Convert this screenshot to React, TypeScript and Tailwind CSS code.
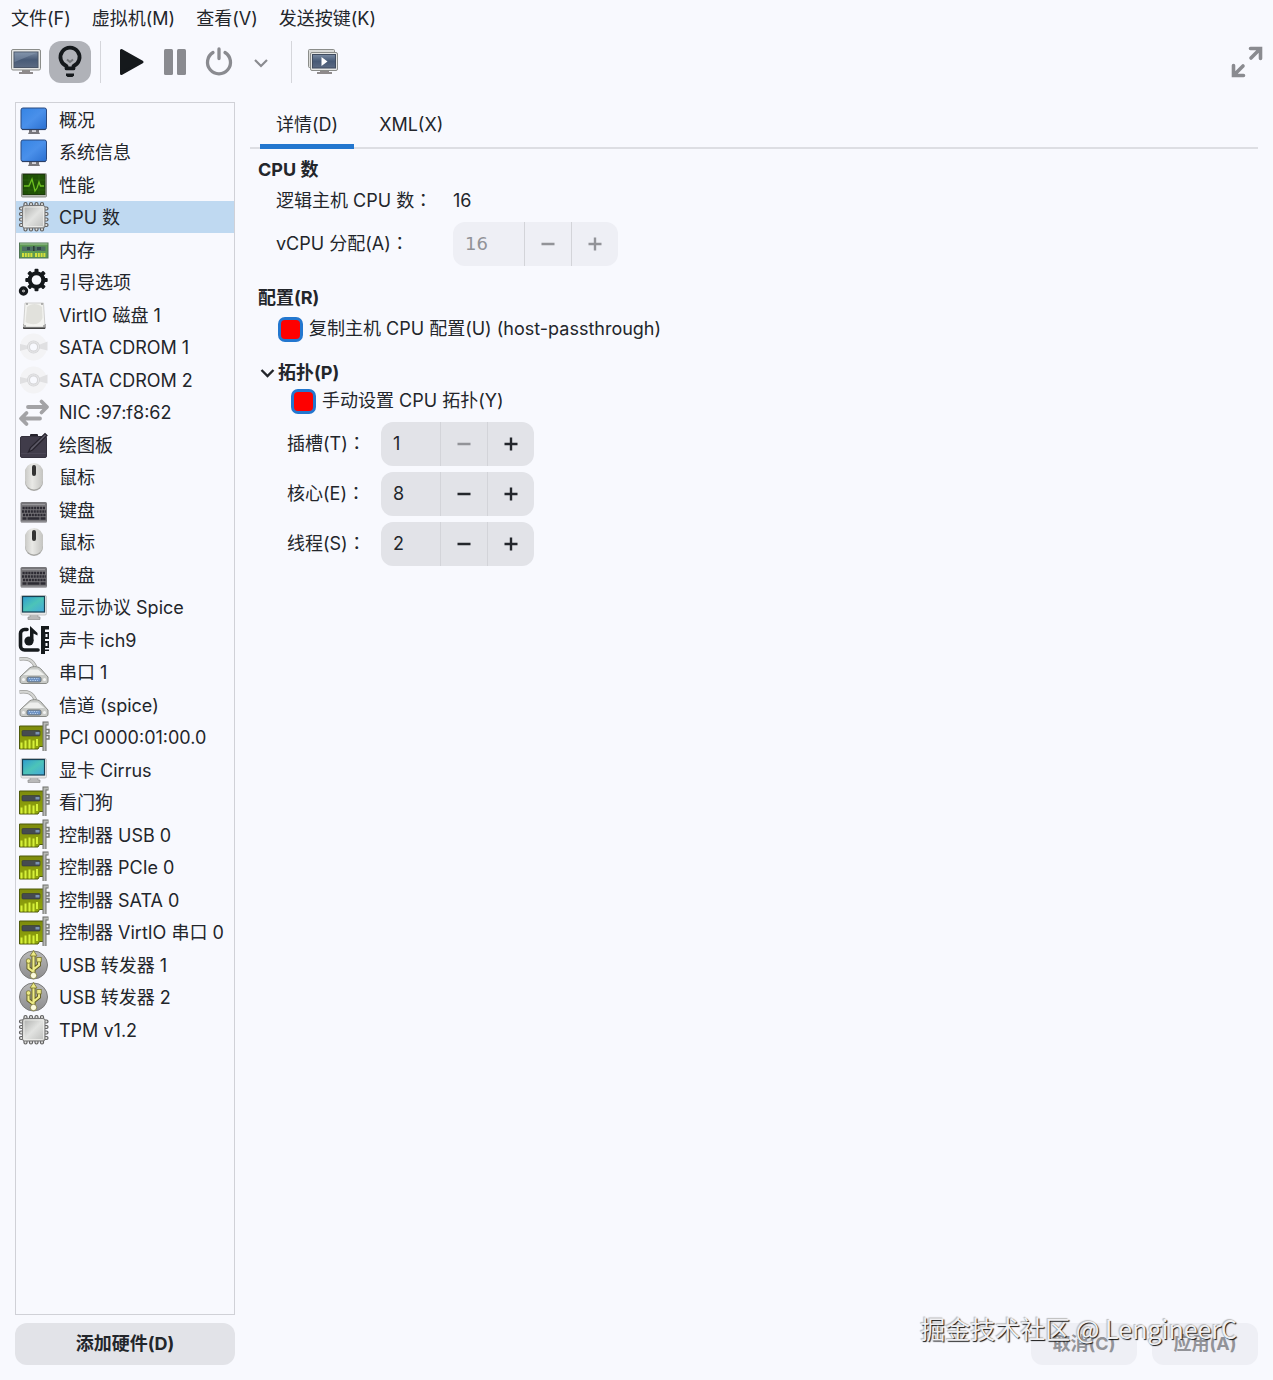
import React, { useState } from "react";

type IconName =
  | "monitor" | "perf" | "chip" | "ram" | "gears" | "disk" | "cd" | "nic" | "tablet"
  | "mouse" | "keyboard" | "display" | "sound" | "serial" | "card" | "usb";

const devices: { icon: IconName; label: string }[] = [
  { icon: "monitor", label: "概况" },
  { icon: "monitor", label: "系统信息" },
  { icon: "perf", label: "性能" },
  { icon: "chip", label: "CPU 数" },
  { icon: "ram", label: "内存" },
  { icon: "gears", label: "引导选项" },
  { icon: "disk", label: "VirtIO 磁盘 1" },
  { icon: "cd", label: "SATA CDROM 1" },
  { icon: "cd", label: "SATA CDROM 2" },
  { icon: "nic", label: "NIC :97:f8:62" },
  { icon: "tablet", label: "绘图板" },
  { icon: "mouse", label: "鼠标" },
  { icon: "keyboard", label: "键盘" },
  { icon: "mouse", label: "鼠标" },
  { icon: "keyboard", label: "键盘" },
  { icon: "display", label: "显示协议 Spice" },
  { icon: "sound", label: "声卡 ich9" },
  { icon: "serial", label: "串口 1" },
  { icon: "serial", label: "信道 (spice)" },
  { icon: "card", label: "PCI 0000:01:00.0" },
  { icon: "display", label: "显卡 Cirrus" },
  { icon: "card", label: "看门狗" },
  { icon: "card", label: "控制器 USB 0" },
  { icon: "card", label: "控制器 PCIe 0" },
  { icon: "card", label: "控制器 SATA 0" },
  { icon: "card", label: "控制器 VirtIO 串口 0" },
  { icon: "usb", label: "USB 转发器 1" },
  { icon: "usb", label: "USB 转发器 2" },
  { icon: "chip", label: "TPM v1.2" },
];

function Gradients() {
  return (
    <svg width="0" height="0" className="absolute" aria-hidden="true">
      <defs>
        <linearGradient id="gBlue" x1="0" y1="0" x2="1" y2="1">
          <stop offset="0" stopColor="#3584e4" /><stop offset="0.5" stopColor="#4a90ea" /><stop offset="1" stopColor="#2a6fd0" />
        </linearGradient>
        <linearGradient id="gScreen" x1="0" y1="0" x2="1" y2="1">
          <stop offset="0" stopColor="#2f9bd0" /><stop offset="0.5" stopColor="#4cc4b8" /><stop offset="1" stopColor="#45a8dc" />
        </linearGradient>
        <linearGradient id="gSlate" x1="0" y1="0" x2="0" y2="1">
          <stop offset="0" stopColor="#7a8ba3" /><stop offset="0.5" stopColor="#475a76" /><stop offset="1" stopColor="#5b6a82" />
        </linearGradient>
        <linearGradient id="gChip" x1="0" y1="0" x2="1" y2="1">
          <stop offset="0" stopColor="#a9aaa8" /><stop offset="0.5" stopColor="#e2e3e1" /><stop offset="1" stopColor="#bcbdbb" />
        </linearGradient>
        <linearGradient id="gMouse" x1="0" y1="0" x2="1" y2="0">
          <stop offset="0" stopColor="#c9c9c6" /><stop offset="0.4" stopColor="#e9e9e6" /><stop offset="1" stopColor="#c4c4c1" />
        </linearGradient>
        <linearGradient id="gUsb" x1="0" y1="0" x2="0" y2="1">
          <stop offset="0" stopColor="#b9b9b9" /><stop offset="1" stopColor="#8c8c8e" />
        </linearGradient>
        <linearGradient id="gCard" x1="0" y1="0" x2="0" y2="1">
          <stop offset="0" stopColor="#7d8a0c" /><stop offset="1" stopColor="#93a80c" />
        </linearGradient>
      </defs>
    </svg>
  );
}

const gearTeeth = [0, 45, 90, 135, 180, 225, 270, 315];
const chipPins = [7.5, 13, 18.5, 24];

const drawings: Record<IconName, React.ReactNode> = {
  monitor: (
    <>
      <path d="M11 25h10v3l1 2H10l1-2z" fill="#77767b" />
      <path d="M14 26h4v2h-4z" fill="#d5d4da" />
      <rect x="3" y="4" width="25.500" height="21.500" rx="2" fill="url(#gBlue)" stroke="#2b4a80" strokeWidth="1" />
      <path d="M4 25.500h23.500" stroke="#2c3f63" strokeWidth="1.200" />
    </>
  ),
  perf: (
    <>
      <rect x="3.500" y="4.500" width="25" height="23.500" rx="1" fill="#b5b9b1" stroke="#8d918a" />
      <rect x="5" y="5.500" width="22" height="20" fill="#1f5106" stroke="#1b3a0b" />
      <path d="M5 11h22M5 21h22M11 6v19M21 6v19" stroke="#2f6a10" strokeWidth=".6" />
      <path d="M6 17h5l3-7 3 12 2-3 2-6 1.500 4H26" fill="none" stroke="#6cc020" strokeWidth="1.300" />
    </>
  ),
  chip: (
    <>
      {chipPins.map((p) => (
        <g key={p} fill="#e2e2e0" stroke="#5f5f5f" strokeWidth="1.200">
          <rect x={p - 1.500} y="1.500" width="3" height="28.500" rx="1.500" />
          <rect x="1.500" y={p - 1.500} width="28.500" height="3" rx="1.500" />
        </g>
      ))}
      <rect x="4.500" y="4.500" width="22.500" height="22.500" rx="2" fill="url(#gChip)" stroke="#777" />
      <rect x="6" y="6" width="19.500" height="19.500" rx="1" fill="none" stroke="#f0f0ee" strokeWidth=".8" />
    </>
  ),
  ram: (
    <>
      <rect x="1.500" y="9" width="28.500" height="15" fill="#5d9a52" stroke="#4f7552" />
      <path d="M2 10h27.500" stroke="#8cb487" strokeWidth="1.500" />
      <rect x="4" y="12.500" width="23.500" height="4.500" fill="#4c6f62" />
      <path d="M9 14.500h3M19 14.500h4" stroke="#33454b" strokeWidth="3" />
      <path d="M15.800 12v5" stroke="#283b35" strokeWidth="1.500" />
      <path d="M4 21h11M17 21h11" stroke="#d4df3d" strokeWidth="4" strokeDasharray="2 .8" />
    </>
  ),
  gears: (
    <>
      <circle cx="18.500" cy="14" r="6.800" fill="none" stroke="#15191c" strokeWidth="4" />
      {gearTeeth.map((a) => (
        <rect key={a} x="16.500" y="2.800" width="4" height="4" rx="1" fill="#15191c" transform={`rotate(${a} 18.500 14)`} />
      ))}
      <circle cx="5.500" cy="25" r="3" fill="none" stroke="#15191c" strokeWidth="3.400" />
      <circle cx="5.500" cy="25" r="1.300" fill="#999" />
    </>
  ),
  disk: (
    <>
      <path d="M5.500 25v4.500h21.500V25" fill="#444" stroke="#444" strokeLinejoin="round" />
      <path d="M7 4h18.500l1.500 24H5.500z" fill="#f3f3f0" stroke="#c7c7c5" strokeWidth=".8" />
      <path d="M9 8c4-4 11-4 15 0l.5 11c-3 8-12 7-17 4z" fill="#e1e1dc" />
      <path d="M8 5h2M23 5h2M6 27h2M25 27h2" stroke="#777" />
    </>
  ),
  cd: (
    <>
      <circle cx="15.500" cy="16" r="13.500" fill="#f3f3f5" />
      <path d="M15.500 16L2 13v7zM15.500 16L29.500 10.500v9z" fill="#e0e0e2" />
      <circle cx="15.500" cy="16" r="6.500" fill="#d6d6d8" />
      <circle cx="15.500" cy="16" r="5.200" fill="none" stroke="#e9e9eb" />
      <circle cx="15.500" cy="16" r="3.500" fill="#f8f9fe" />
    </>
  ),
  nic: (
    <g fill="none" stroke="#a3a3a6" strokeWidth="3.800" strokeLinecap="round" strokeLinejoin="round">
      <path d="M10 11h18M23.500 5.500L29 11l-5.500 5.500" />
      <path d="M22 22.500H4M8.500 17L3 22.500 8.500 28" />
    </g>
  ),
  tablet: (
    <>
      <rect x="12" y="5" width="8" height="5" rx="1" fill="#25222c" />
      <rect x="2.500" y="7.500" width="26" height="21" rx="1.500" fill="#403c4a" stroke="#34313d" />
      <path d="M3 24.500h25" stroke="#4b4756" />
      <path d="M10.500 23l2-4.500L27 4.500l2 2L14.500 21z" fill="#5b5865" stroke="#25222c" strokeWidth="1.200" />
    </>
  ),
  mouse: (
    <>
      <rect x="7" y="3" width="18" height="27" rx="9" fill="#a7a7a4" />
      <rect x="7" y="2" width="18" height="26.500" rx="9" fill="url(#gMouse)" />
      <rect x="14" y="4" width="4" height="11" rx="2" fill="#333" />
    </>
  ),
  keyboard: (
    <>
      <rect x="2.500" y="8" width="26.500" height="20.500" rx="1.500" fill="#77767a" />
      <path d="M3 28h25.500" stroke="#a5a4a8" />
      <path d="M4 10.500h23" stroke="#98979b" />
      <path d="M4.500 14h23M4 17.500h24M5 21h23" stroke="#2d2b33" strokeWidth="2.500" strokeDasharray="2.200 .7" />
      <path d="M4.500 24.500h4M9.500 24.500h12M22.500 24.500h5" stroke="#2d2b33" strokeWidth="2.300" />
    </>
  ),
  display: (
    <>
      <path d="M12 23h8v3h2v2.500H10V26h2z" fill="#b9b9b9" stroke="#8f8f8f" strokeWidth=".7" />
      <rect x="3" y="4.500" width="25.500" height="19.500" rx="1.500" fill="#e8e8e8" stroke="#bdbdbd" strokeWidth=".8" />
      <rect x="4.500" y="5.500" width="22" height="15.500" fill="url(#gScreen)" stroke="#173f52" strokeWidth="1.200" />
    </>
  ),
  sound: (
    <>
      <path d="M9 5.500H6.500a4 4 0 0 0-4 4V22a4 4 0 0 0 4 4H20" fill="none" stroke="#15191c" strokeWidth="3.600" strokeLinecap="round" />
      <circle cx="11" cy="17" r="4.600" fill="#15191c" />
      <path d="M12 17V2l7.500 7v2.500l-4-2V17z" fill="#15191c" />
      <path d="M23 2h8v3.500h-4V8h4v7h-4v2h4v7h-4v1.500h4V27h-4v3h-4z" fill="#15191c" />
      <path d="M27.500 10h2v3h-2zM27.500 19h2v3h-2z" fill="#f8f9fe" />
    </>
  ),
  serial: (
    <>
      <path d="M1.500 3c9-1 13 1 16 8" fill="none" stroke="#9a9b98" strokeWidth="3.600" />
      <path d="M1.500 3c9-1 13 1 16 8" fill="none" stroke="#d5d6d4" strokeWidth="2" />
      <path d="M2 21l9-8.500c2-2.500 9-2.500 11.500 0L30 21v4c0 2-1 2.500-3 2.500H5C3 27.500 2 27 2 25z" fill="#c9cbc8" stroke="#888a86" />
      <path d="M5 19l7-5.500h8l6.500 5.500z" fill="#eeefed" />
      <rect x="9" y="21" width="14" height="5" rx="1.500" fill="#6f93c4" stroke="#6c706f" />
      <path d="M11 22.500h10M12 24.500h8" stroke="#b9d0ea" strokeDasharray="1.200 1.200" />
      <circle cx="5.500" cy="23.500" r="1.500" fill="#f4f4f4" /><circle cx="26.500" cy="23.500" r="1.500" fill="#f4f4f4" />
    </>
  ),
  card: (
    <>
      <path d="M1.500 5h24v20.500h-4l-1.500 2.500H1.500z" fill="url(#gCard)" stroke="#4e5a0a" />
      <rect x="4" y="9.500" width="18" height="5.500" rx="1" fill="#454b50" stroke="#30353a" strokeWidth=".6" />
      <path d="M17.500 11h4v2.500h-4z" fill="#7b93b3" />
      <path d="M3.500 21.500v6M7.500 19.500v8M11.500 18.500v9M15.500 19.500v8M19 18v7" stroke="#d6f03a" strokeWidth="2" />
      <path d="M30.500 2.500h-4V30" fill="none" stroke="#6c6f6a" strokeWidth="4" />
      <path d="M30.500 2.500h-4V30" fill="none" stroke="#b8bab6" strokeWidth="2" />
      <path d="M28 8.500h3v3.500h-3M28 14.500h3v3.500h-3" fill="none" stroke="#777a75" strokeWidth="1.400" />
    </>
  ),
  usb: (
    <>
      <circle cx="15.500" cy="16" r="14" fill="url(#gUsb)" stroke="#7c7c7c" />
      <g fill="none" stroke="#5f5a1c" strokeWidth="4">
        <path d="M15.500 26V6M15.500 23l-5-4v-6M15.500 20.500l5.500-4.500v-4" />
      </g>
      <g fill="none" stroke="#ecea86" strokeWidth="2.200">
        <path d="M15.500 26V6M15.500 23l-5-4v-6M15.500 20.500l5.500-4.500v-4" />
      </g>
      <path d="M15.500 1.500l3.500 5.500h-7z" fill="#ecea86" stroke="#6d6820" strokeWidth=".7" />
      <circle cx="10.500" cy="12" r="2.300" fill="#ecea86" stroke="#6d6820" strokeWidth=".7" />
      <rect x="18.800" y="8.500" width="4.400" height="4.400" fill="#ecea86" stroke="#6d6820" strokeWidth=".7" />
      <circle cx="15.500" cy="26.500" r="3.200" fill="#fbfade" stroke="#6d6820" strokeWidth=".7" />
    </>
  ),
};

function DeviceIcon({ name }: { name: IconName }) {
  return (
    <svg viewBox="0 0 32 32" className="size-8 shrink-0" aria-hidden="true">
      {drawings[name]}
    </svg>
  );
}

function Colon() {
  return <span className="font-['Noto_Sans_CJK_TC',sans-serif] leading-none">：</span>;
}

function Spin({ id, value, min = 1, disabled = false, wide = false }: {
  id: string; value: number; min?: number; disabled?: boolean; wide?: boolean;
}) {
  const [n, setN] = useState(value);
  return (
    <div className={`flex h-11 w-fit overflow-hidden rounded-xl ${disabled ? "bg-[#eeeff5] text-[#929398]" : "bg-[#e2e3e8] text-[#23262b]"}`}>
      <input
        id={id}
        value={n}
        disabled={disabled}
        onChange={(e) => setN(Number(e.target.value) || min)}
        className={`bg-transparent pl-3 outline-none ${wide ? "w-[71px] font-['DejaVu_Sans',sans-serif]" : "w-[59px]"}`}
      />
      <button type="button" aria-label="减少" disabled={disabled || n <= min} onClick={() => setN(n - 1)}
        className="flex w-[47px] items-center justify-center border-l border-[#d3d4d9] disabled:text-[#929398]">
        <svg viewBox="0 0 14 14" className="size-3.5"><path d="M.5 7h13" stroke="currentColor" strokeWidth="2.400" /></svg>
      </button>
      <button type="button" aria-label="增加" disabled={disabled} onClick={() => setN(n + 1)}
        className="flex w-[47px] items-center justify-center border-l border-[#d3d4d9]">
        <svg viewBox="0 0 14 14" className="size-3.5"><path d="M.5 7h13M7 .5v13" stroke="currentColor" strokeWidth="2.400" /></svg>
      </button>
    </div>
  );
}

function Check({ children, className }: { children: React.ReactNode; className: string }) {
  return (
    <label className={`flex h-7 items-center gap-1.5 ${className}`}>
      <input type="checkbox" defaultChecked
        className="size-[25px] shrink-0 appearance-none rounded-[7px] border-[3px] border-[#2377cf] bg-[#fe0000]" />
      {children}
    </label>
  );
}

export default function App() {
  const [selected, setSelected] = useState(3);
  return (
    <div className="relative flex min-h-screen flex-col bg-[#f8f9fe] font-['Inter','Noto_Sans_CJK_SC',sans-serif] text-[18px] leading-7 text-[#23262b]">
      <Gradients />
      <nav className="flex h-[37px] items-center gap-[21px] pl-[11px]">
        {["文件(F)", "虚拟机(M)", "查看(V)", "发送按键(K)"].map((m) => (
          <button key={m} type="button">{m}</button>
        ))}
      </nav>

      <div className="flex h-[49px] items-center pr-2.5 pl-[11px]">
        <button type="button" aria-label="控制台" className="mr-2">
          <svg viewBox="0 0 30 30" className="size-[30px]">
            <path d="M11 22h8v3h3v2H8v-2h3z" fill="#8e8a8b" />
            <rect x=".5" y="2.500" width="29" height="20.500" rx="1.500" fill="#e5e6e4" stroke="#8b8d8a" />
            <rect x="3" y="5" width="24" height="15.500" fill="url(#gSlate)" stroke="#4b5668" />
            <path d="M3.500 5.500h23L3.500 15z" fill="#8fa0b5" opacity=".45" />
          </svg>
        </button>
        <button type="button" aria-label="详情" className="flex size-[42px] items-center justify-center rounded-xl bg-[#b0b2b8]">
          <svg viewBox="0 0 42 42" className="size-[42px]">
            <path d="M17.500 27.500V25a9.500 9.500 0 1 1 7 0v2.500z" fill="none" stroke="#15191c" strokeWidth="3.800" strokeLinejoin="round" />
            <path d="M18 18.500l3 2.500 3-2.500" fill="none" stroke="#74777b" strokeWidth="2" />
            <path d="M15 29.500h12V32H15z" fill="#b0b2b8" />
            <path d="M17 32.500h8v2L23.500 36h-5L17 34.500z" fill="#15191c" />
          </svg>
        </button>
        <span className="mx-[9px] h-[42px] w-px bg-[#d5d6db]" />
        <button type="button" aria-label="运行" className="ml-[9px]">
          <svg viewBox="0 0 26 28" className="h-7 w-[26px]"><path d="M2.500 2.500v23L23 14z" fill="#15191c" stroke="#15191c" strokeWidth="3" strokeLinejoin="round" /></svg>
        </button>
        <button type="button" aria-label="暂停" className="ml-[18px]">
          <svg viewBox="0 0 24 28" className="h-7 w-6"><rect x="1" y="1" width="9" height="26" rx="1.500" fill="#8a8b90" /><rect x="14" y="1" width="9" height="26" rx="1.500" fill="#8a8b90" /></svg>
        </button>
        <button type="button" aria-label="关机" className="ml-[18px]">
          <svg viewBox="0 0 28 30" className="h-[30px] w-7" fill="none" stroke="#8a8b90" strokeWidth="3.300" strokeLinecap="round">
            <path d="M8 5.500a11.500 11.500 0 1 0 12 0M14 2v9.500" />
          </svg>
        </button>
        <button type="button" aria-label="关机选项" className="ml-5">
          <svg viewBox="0 0 16 16" className="size-4" fill="none" stroke="#8a8b90" strokeWidth="2.200"><path d="M2 6l6 6 6-6" /></svg>
        </button>
        <span className="mr-4 ml-[22px] h-[42px] w-px bg-[#d5d6db]" />
        <button type="button" aria-label="快照">
          <svg viewBox="0 0 30 30" className="size-[30px]">
            <rect x=".5" y="2.500" width="26" height="18" rx="1" fill="#d9dad8" stroke="#8b8d8a" />
            <path d="M12 23h9v2h3v2H9v-2h3z" fill="#8e8a8b" />
            <rect x="2.500" y="5.500" width="27" height="18" rx="1.500" fill="#e5e6e4" stroke="#8b8d8a" />
            <rect x="4.500" y="7.500" width="23" height="13.500" fill="url(#gSlate)" stroke="#3f4b5e" />
            <path d="M13.500 10v9l6-4.500z" fill="#fff" />
          </svg>
        </button>
        <button type="button" aria-label="全屏" className="ml-auto">
          <svg viewBox="0 0 32 32" className="size-8" fill="none" stroke="#8a8b90" strokeWidth="3.600" strokeLinecap="round">
            <path d="M19.500 2.500h10v10M28.500 3.500l-8.500 8.500M2.500 19.500v10h10M3.500 28.500L12 20" />
          </svg>
        </button>
      </div>

      <main className="flex grow gap-[15px] px-[15px] pt-4 pb-[15px]">
        <aside className="flex w-[220px] shrink-0 flex-col gap-2">
          <ul className="grow border border-[#d0d1d7]">
            {devices.map((d, i) => (
              <li key={i} className="odd:h-[33px] even:h-8">
                <button type="button" onClick={() => setSelected(i)}
                  className={`flex size-full items-center gap-[9px] pl-0.5 whitespace-nowrap ${i === selected ? "bg-[#bfd9f1]" : ""}`}>
                  <DeviceIcon name={d.icon} />
                  <span className="pt-0.5">{d.label}</span>
                </button>
              </li>
            ))}
          </ul>
          <button type="button" className="h-[42px] rounded-xl bg-[#e2e3e8] font-bold">添加硬件(D)</button>
        </aside>

        <section className="flex grow flex-col">
          <div role="tablist" className="flex h-[47px] gap-[9px] border-b-2 border-[#dddee3] pl-2.5">
            <button type="button" role="tab" aria-selected="true" className="-mb-0.5 border-b-[5px] border-[#2377cf] px-4 pt-[3px]">详情(D)</button>
            <button type="button" role="tab" aria-selected="false" className="px-4">XML(X)</button>
          </div>

          <div className="flex grow flex-col px-2 pt-[7px]">
            <h2 className="font-bold">CPU 数</h2>
            <div className="mt-[3px] grid grid-cols-[177px_auto] items-center justify-start gap-y-[7px] pl-[18px]">
              <span>逻辑主机 CPU 数<Colon /></span>
              <span>16</span>
              <label htmlFor="vcpu">vCPU 分配(A)<Colon /></label>
              <Spin id="vcpu" value={16} disabled wide />
            </div>

            <h2 className="mt-[18px] font-bold">配置(R)</h2>
            <Check className="mt-[3px] pl-5">复制主机 CPU 配置(U) (host-passthrough)</Check>

            <h2 className="mt-4 font-bold">
              <button type="button" className="flex items-center gap-0.5">
                <svg viewBox="0 0 18 18" className="size-[18px]" fill="none" stroke="#23262b" strokeWidth="2.400"><path d="M3.500 6l6 6 6-6" /></svg>
                拓扑(P)
              </button>
            </h2>
            <Check className="pl-[33px]">手动设置 CPU 拓扑(Y)</Check>
            <div className="mt-[7px] grid grid-cols-[94px_auto] items-center justify-start gap-y-1.5 pl-[29px]">
              <label htmlFor="sockets">插槽(T)<Colon /></label>
              <Spin id="sockets" value={1} />
              <label htmlFor="cores">核心(E)<Colon /></label>
              <Spin id="cores" value={8} />
              <label htmlFor="threads">线程(S)<Colon /></label>
              <Spin id="threads" value={2} />
            </div>
          </div>

          <div className="flex justify-end gap-[15px] font-bold text-[#929398]">
            <button type="button" disabled className="h-[42px] w-[106px] rounded-xl bg-[#eeeff5]">取消(C)</button>
            <button type="button" disabled className="h-[42px] w-[106px] rounded-xl bg-[#eeeff5]">应用(A)</button>
          </div>
        </section>
      </main>

      <div className="pointer-events-none absolute right-9 bottom-[34px] font-['Noto_Sans_CJK_SC',sans-serif] text-[25px] leading-9 whitespace-nowrap text-[#f0f0f3] [text-shadow:1px_1px_1px_#111,-1px_-1px_1px_#bbb]">
        掘金技术社区 @ LengineerC
      </div>
    </div>
  );
}
